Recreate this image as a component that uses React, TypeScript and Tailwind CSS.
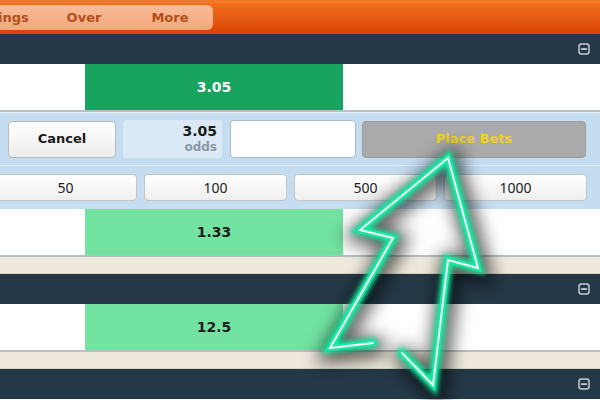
import React from "react";

const odds = "font-['DejaVu_Sans',sans-serif] font-bold text-[14px]";

function MinusBox() {
  return (
    <svg width="12" height="12" viewBox="0 0 12 12" className="text-[#c3ccd4]">
      <rect x="1" y="1" width="10" height="10" rx="2.5" fill="none" stroke="currentColor" strokeWidth="1.5" />
      <rect x="3" y="5.2" width="6" height="1.8" fill="currentColor" />
    </svg>
  );
}

function DarkBar() {
  return (
    <div className="flex h-[30px] shrink-0 items-center justify-end bg-[#243847] pr-[10px]">
      <MinusBox />
    </div>
  );
}

function Row({ price, dark }: { price: string; dark?: boolean }) {
  return (
    <div className="flex h-[48px] shrink-0 border-b-2 border-[#b6bec6]">
      <div className="w-[85px] bg-white" />
      <div
        className={
          dark
            ? `flex w-[258px] items-center justify-center bg-[#18a35f] text-white ${odds}`
            : `flex w-[258px] items-center justify-center bg-[#72e3a1] text-[#1c1c1c] ${odds}`
        }
      >
        {price}
      </div>
      <div className="flex-1 bg-white" />
    </div>
  );
}

function Beige() {
  return <div className="h-[17px] shrink-0 border-b border-[#d8d2c4] bg-[#efe9dd]" />;
}

const stakeBtn =
  "flex h-[27px] w-[143px] items-center justify-center rounded-[4px] border border-[#c4c4c4] bg-gradient-to-b from-white to-[#efefef] font-['Noto_Sans',sans-serif] text-[14px] text-[#222]";

function Arrow() {
  const pts = "373,343 330,348 393,238 360,230 448,158 478,268 448,260 433,385 402,353";
  return (
    <svg className="pointer-events-none absolute inset-0" width="600" height="400" viewBox="0 0 600 400">
      <defs>
        <filter id="sh" x="-50%" y="-50%" width="200%" height="200%">
          <feGaussianBlur stdDeviation="9" />
        </filter>
        <filter id="gl" x="-50%" y="-50%" width="200%" height="200%">
          <feGaussianBlur stdDeviation="2.5" />
        </filter>
      </defs>
      <polyline points={pts} fill="none" stroke="#000" strokeOpacity="0.65" strokeWidth="20" strokeLinejoin="miter" strokeLinecap="round" filter="url(#sh)" transform="translate(3,4)" />
      <polyline points={pts} fill="none" stroke="#12e39a" strokeWidth="10" strokeLinejoin="miter" strokeLinecap="round" filter="url(#gl)" />
      <polyline points={pts} fill="none" stroke="#19e8a2" strokeWidth="6" strokeLinejoin="miter" strokeLinecap="round" />
      <polyline points={pts} fill="none" stroke="#f4fffa" strokeWidth="2" strokeLinejoin="miter" strokeLinecap="round" />
    </svg>
  );
}

export default function App() {
  return (
    <div className="relative flex h-[400px] w-[600px] flex-col overflow-hidden bg-white font-['DejaVu_Sans',sans-serif]">
      {/* top nav */}
      <div className="h-[34px] shrink-0 border-t-[3px] border-b border-t-[#f07a30] border-b-[#5d7384] bg-gradient-to-b from-[#f36f1f] to-[#d94404]">
        <div className="h-px bg-[#9a8c84]" />
        <div className="mt-[1px] ml-[-45px] flex h-[25px] w-[258px] items-center rounded-r-[6px] bg-gradient-to-b from-[#f9bb98] to-[#f3a87c] text-[13px] font-bold text-[#b25019]">
          <span className="w-[86px] text-center">Settings</span>
          <span className="w-[86px] text-center">Over</span>
          <span className="w-[86px] text-center">More</span>
        </div>
      </div>

      <DarkBar />
      <Row price="3.05" dark />

      {/* bet slip */}
      <div className="flex h-[97px] shrink-0 flex-col border-t border-[#e3eef8] bg-[#c5ddf1]">
        <div className="flex h-[53px] items-center gap-[7px] border-b border-[#e2edf7] pl-[8px]">
          <div className="flex h-[37px] w-[108px] items-center justify-center rounded-[4px] border border-[#b9b9b9] bg-gradient-to-b from-white to-[#ececec] text-[13px] font-bold text-[#1a1a1a]">
            Cancel
          </div>
          <div className="flex h-[38px] w-[99px] flex-col items-end justify-center rounded-[3px] bg-[#dbe9f7] pr-[5px] leading-[16px]">
            <span className="text-[14px] font-bold text-[#1a1a1a]">3.05</span>
            <span className="text-[12px] font-bold text-[#8b98a4]">odds</span>
          </div>
          <div className="ml-px h-[38px] w-[126px] rounded-[4px] border border-[#a9bccd] bg-white" />
          <div className="ml-[-1px] flex h-[37px] w-[224px] items-center justify-center rounded-[4px] border border-[#9d9d9d] bg-[#aaaaaa] text-[13px] font-bold text-[#f2d31c]">
            Place Bets
          </div>
        </div>
        <div className="ml-[-6px] flex flex-1 items-center gap-[7px]">
          <div className={stakeBtn}>50</div>
          <div className={stakeBtn}>100</div>
          <div className={stakeBtn}>500</div>
          <div className={stakeBtn}>1000</div>
        </div>
      </div>

      <Row price="1.33" />
      <Beige />
      <DarkBar />
      <Row price="12.5" />
      <Beige />
      <DarkBar />

      <Arrow />
    </div>
  );
}
